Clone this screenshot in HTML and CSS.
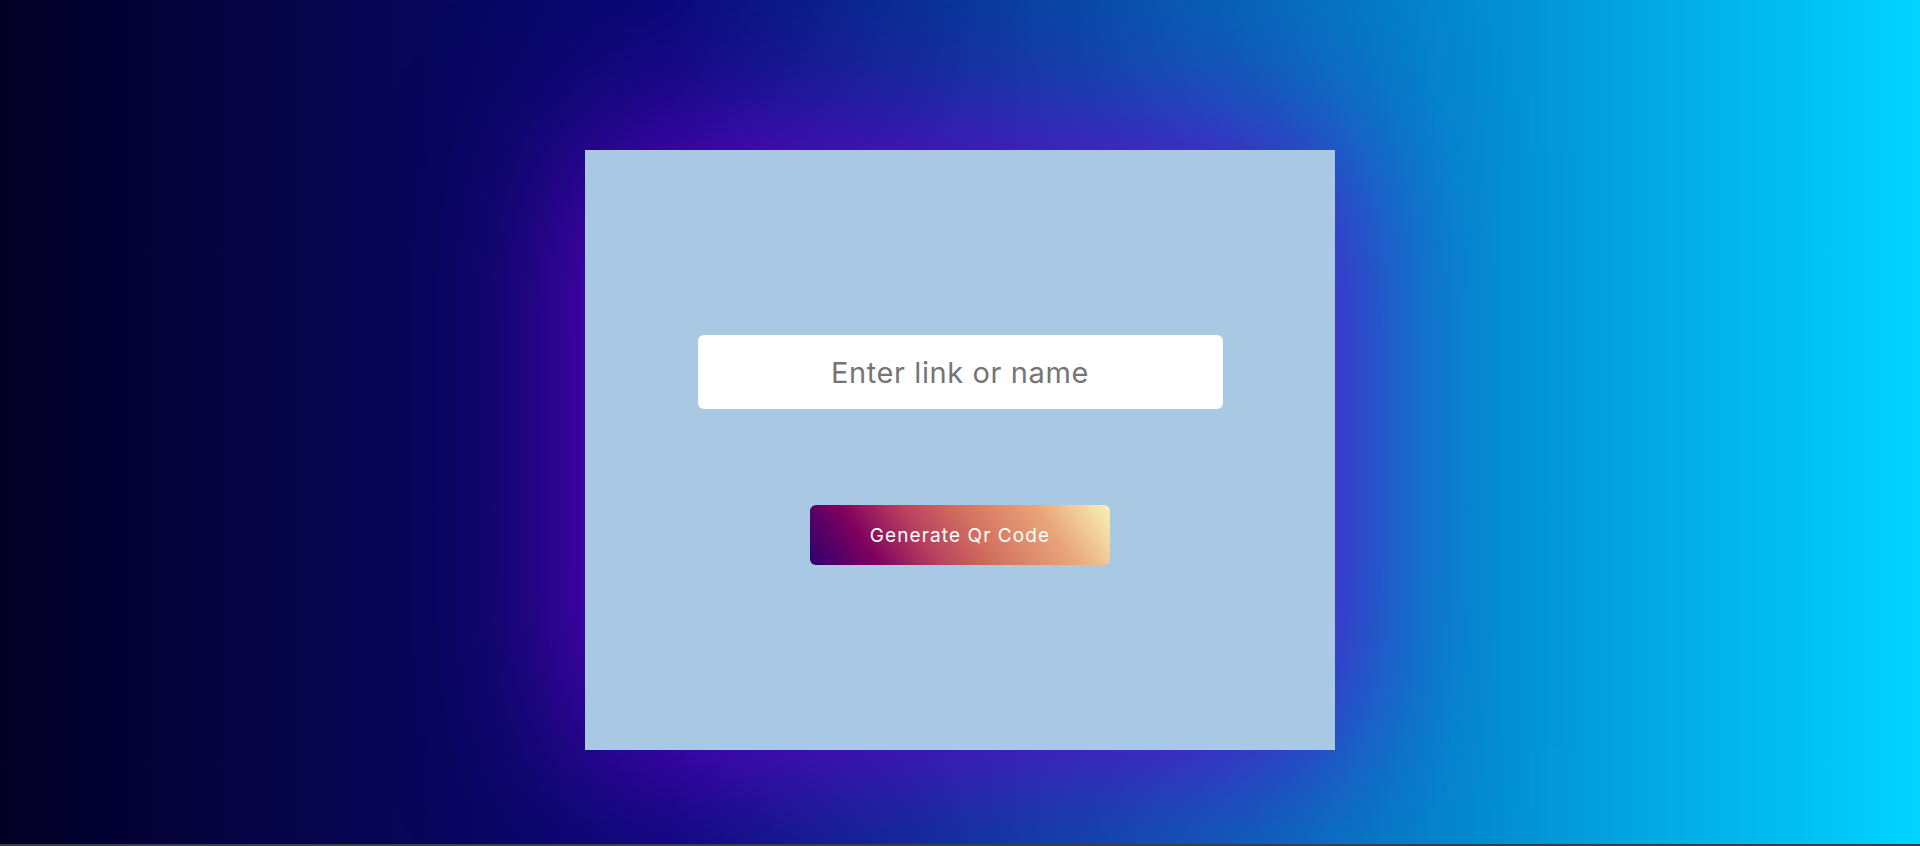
FILE: index.html
```html
<!DOCTYPE html>
<html lang="en">
<head>
<meta charset="UTF-8">
<title>QR Code Generator</title>
<link rel="stylesheet" href="styles.css">
</head>
<body>
<main class="page">
  <section class="card">
    <input class="link-input" type="text" placeholder="Enter link or name">
    <button class="generate-btn" type="button">Generate Qr Code</button>
  </section>
</main>
<div class="bottom-line"></div>
</body>
</html>
```
FILE: styles.css
```css
html {
  background: #3b3e43;
}
body {
  margin: 0;
  font-family: Inter, "Open Sans", sans-serif;
}
.page {
  height: 844px;
  box-sizing: border-box;
  padding-top: 150px;
  display: flex;
  justify-content: center;
  align-items: flex-start;
  background: linear-gradient(90deg, #020024 0%, #090979 35%, #00d4ff 100%);
  overflow: hidden;
}
.card {
  width: 750px;
  height: 600px;
  background: #a9c8e3;
  display: flex;
  flex-direction: column;
  align-items: center;
  justify-content: center;
  gap: 96px;
  box-shadow: 0 0 160px rgba(112, 0, 212, 1);
}
.link-input {
  width: 525px;
  height: 74px;
  box-sizing: border-box;
  border: none;
  border-radius: 6px;
  background: #ffffff;
  font-family: Inter, "Open Sans", sans-serif;
  font-size: 29px;
  letter-spacing: 0.6px;
  text-align: center;
  outline: none;
  color: #333;
}
.link-input::placeholder {
  color: #757575;
}
.generate-btn {
  width: 300px;
  height: 60px;
  border: none;
  border-radius: 6px;
  background: linear-gradient(56deg, #2b006e 0%, #7e005f 20%, #b8405e 38%, #d2705f 55%, #e9a57a 78%, #faf2b8 100%);
  color: #ffffff;
  font-family: Inter, "Open Sans", sans-serif;
  font-size: 19px;
  letter-spacing: 1.1px;
  cursor: pointer;
}
.bottom-line {
  height: 2px;
  background: #3b3e43;
}
```
